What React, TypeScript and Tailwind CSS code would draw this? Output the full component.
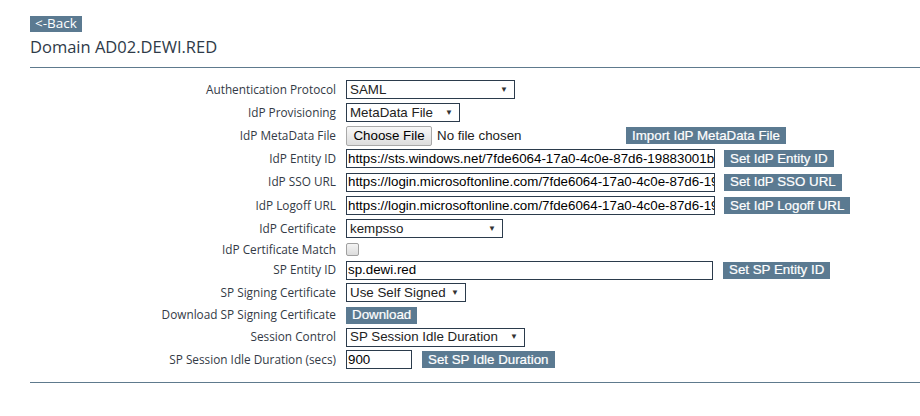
import React from "react";

const LABEL_FONT = { fontFamily: '"Open Sans", "Noto Sans", sans-serif' };

function Btn({ children }: { children: React.ReactNode }) {
  return (
    <span className="flex h-[17px] items-center whitespace-nowrap bg-[#5b7a91] px-[6px] text-[13.33px] leading-none text-white [font-family:'Liberation_Sans',Arial,sans-serif] [-webkit-text-stroke:0.2px_white]">
      {children}
    </span>
  );
}

function Select({ value, width }: { value: string; width: number }) {
  return (
    <div
      className="flex h-[19px] items-center justify-between border border-[#2b3b4c] bg-white pl-[3px] pr-[6px] text-[13.33px] text-[#222] [font-family:'Liberation_Sans',Arial,sans-serif]"
      style={{ width }}
    >
      <span>{value}</span>
      <span className="text-[8px] text-[#333]">▼</span>
    </div>
  );
}

function TextInput({ value, width }: { value: string; width: number }) {
  return (
    <div
      className="flex h-[19px] items-center overflow-hidden whitespace-nowrap border border-[#2b3b4c] bg-white pl-[1px] text-[13.33px] text-black [font-family:'Liberation_Sans',Arial,sans-serif]"
      style={{ width }}
    >
      {value}
    </div>
  );
}

function Row({ label, h, children }: { label: string; h: string; children?: React.ReactNode }) {
  return (
    <div className={`flex items-center ${h}`}>
      <div className="w-[306px] shrink-0 text-right text-[11.8px] text-[#333a45]" style={LABEL_FONT}>
        {label}
      </div>
      <div className="ml-[10px] flex items-center">{children}</div>
    </div>
  );
}

export default function App() {
  return (
    <div className="h-[416px] w-[920px] bg-white pl-[30px] pt-[16px]">
      <div className="flex h-[16px] w-fit items-center bg-[#5b7a91] px-[5px] text-[13.5px] leading-none text-white" style={LABEL_FONT}>
        &lt;-Back
      </div>
      <div className="mt-[4px] text-[16.5px] leading-[22px] text-[#2e3a48]" style={LABEL_FONT}>
        Domain AD02.DEWI.RED
      </div>
      <div className="mt-[9px] h-px bg-[#5e7a8d]" />

      <div className="mt-[10px]">
        <Row label="Authentication Protocol" h="h-[23px]">
          <Select value="SAML" width={169} />
        </Row>
        <Row label="IdP Provisioning" h="h-[23px]">
          <Select value="MetaData File" width={114} />
        </Row>
        <Row label="IdP MetaData File" h="h-[23px]">
          <div className="flex h-[20px] w-[86px] items-center justify-center rounded-[2px] border border-[#a9a9a9] bg-gradient-to-b from-[#f8f8f8] to-[#dddddd] text-[13.33px] text-black [font-family:'Liberation_Sans',Arial,sans-serif]">
            Choose File
          </div>
          <span className="ml-[5px] w-[189px] text-[13.33px] text-[#222] [font-family:'Liberation_Sans',Arial,sans-serif]">
            No file chosen
          </span>
          <Btn>Import IdP MetaData File</Btn>
        </Row>
        <Row label="IdP Entity ID" h="h-[23px]">
          <TextInput value="https://sts.windows.net/7fde6064-17a0-4c0e-87d6-19883001b" width={369} />
          <span className="ml-[9px]">
            <Btn>Set IdP Entity ID</Btn>
          </span>
        </Row>
        <Row label="IdP SSO URL" h="h-[24px]">
          <TextInput value="https://login.microsoftonline.com/7fde6064-17a0-4c0e-87d6-19" width={369} />
          <span className="ml-[9px]">
            <Btn>Set IdP SSO URL</Btn>
          </span>
        </Row>
        <Row label="IdP Logoff URL" h="h-[23px]">
          <TextInput value="https://login.microsoftonline.com/7fde6064-17a0-4c0e-87d6-19" width={369} />
          <span className="ml-[9px]">
            <Btn>Set IdP Logoff URL</Btn>
          </span>
        </Row>
        <Row label="IdP Certificate" h="h-[23px]">
          <Select value="kempsso" width={157} />
        </Row>
        <Row label="IdP Certificate Match" h="h-[19px]">
          <div className="h-[13px] w-[13px] rounded-[2px] border border-[#a0a0a0] bg-gradient-to-b from-[#f4f4f4] to-[#dcdcdc]" />
        </Row>
        <Row label="SP Entity ID" h="h-[22px]">
          <TextInput value="sp.dewi.red" width={367} />
          <span className="ml-[10px]">
            <Btn>Set SP Entity ID</Btn>
          </span>
        </Row>
        <Row label="SP Signing Certificate" h="h-[23px]">
          <Select value="Use Self Signed" width={120} />
        </Row>
        <Row label="Download SP Signing Certificate" h="h-[22px]">
          <Btn>Download</Btn>
        </Row>
        <Row label="Session Control" h="h-[22px]">
          <Select value="SP Session Idle Duration" width={179} />
        </Row>
        <Row label="SP Session Idle Duration (secs)" h="h-[23px]">
          <TextInput value="900" width={66} />
          <span className="ml-[10px]">
            <Btn>Set SP Idle Duration</Btn>
          </span>
        </Row>
      </div>

      <div className="mt-[11px] h-px bg-[#5e7a8d]" />
    </div>
  );
}
